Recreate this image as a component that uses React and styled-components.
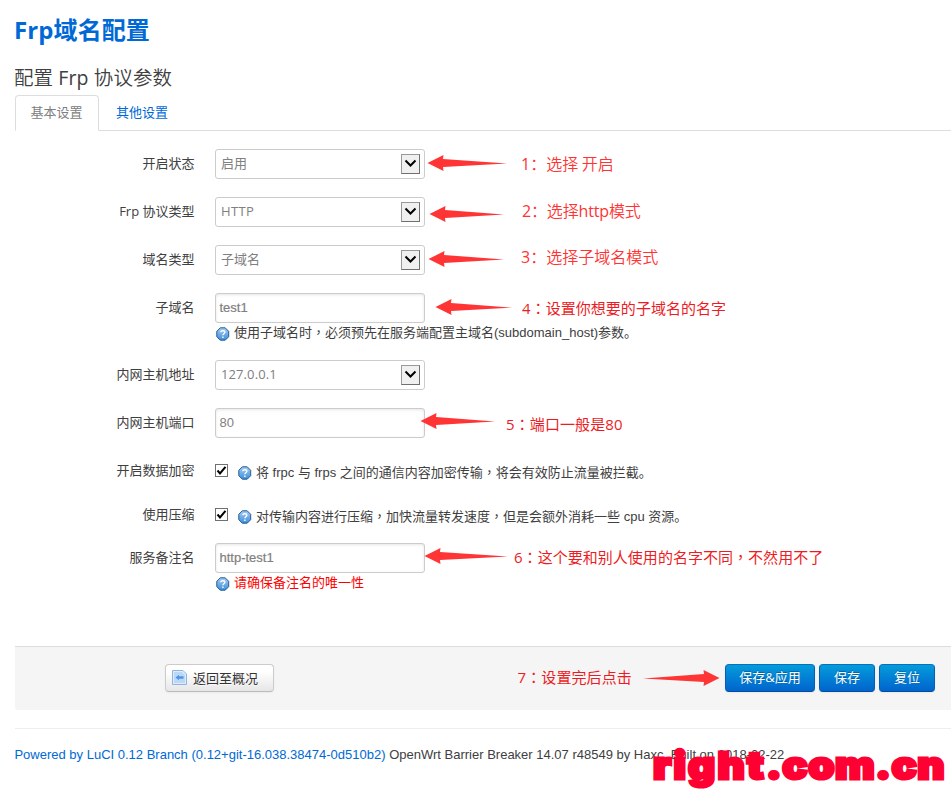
import React from 'react';
import styled, { createGlobalStyle, css } from 'styled-components';

const cjk = '"Noto Sans CJK SC", sans-serif';

const GlobalStyle = createGlobalStyle`
  * { box-sizing: border-box; }
  body { margin: 0; background: #fff; overflow: hidden; }
`;

const Page = styled.div`
  width: 951px;
  height: 793px;
  padding-left: 15px;
  overflow: hidden;
  display: flex;
  flex-direction: column;
  color: #404040;
  font: 13px/18px "Liberation Sans", ${cjk};
  white-space: nowrap;
`;

const Title = styled.h2`
  margin: 0 0 0 -1px;
  height: 60px;
  padding-top: 12px;
  font: bold 24px/36px "Open Sans", ${cjk};
  color: #0069d6;
  letter-spacing: 0.1px;
`;

const Subtitle = styled.h3`
  margin: 0 0 0 -1px;
  height: 35px;
  font: 400 19.5px/33px "Open Sans", ${cjk};
  letter-spacing: 0.1px;
`;

const Light = styled.span`
  font-family: "Noto Sans CJK SC", sans-serif;
  font-weight: 350;
`;

const Tabs = styled.nav`
  display: flex;
  height: 36px;
  border-bottom: 1px solid #ddd;
`;

const Tab = styled.a`
  height: 36px;
  width: ${(p) => (p.$active ? 84 : 86)}px;
  padding-right: ${(p) => (p.$active ? 1 : 0)}px;
  text-align: center;
  line-height: 34px;
  border: 1px solid ${(p) => (p.$active ? '#ddd' : 'transparent')};
  border-bottom-color: ${(p) => (p.$active ? '#fff' : 'transparent')};
  border-radius: 4px 4px 0 0;
  color: ${(p) => (p.$active ? '#808080' : '#0069d6')};
`;

const Form = styled.main`
  display: flex;
  flex-direction: column;
  padding-top: 18px;
  height: 515px;
`;

const Row = styled.div`
  position: relative;
  display: flex;
  align-items: flex-start;
  height: ${(p) => p.$h}px;
`;

const Label = styled.label`
  width: 179.5px;
  margin-right: 20.5px;
  text-align: right;
  line-height: 29px;
  font-family: "Open Sans", ${cjk};
`;

const Field = styled.div`
  display: flex;
  flex-direction: column;
`;

const box = css`
  width: 210px;
  height: 30px;
  border: 1px solid #ccc;
  border-radius: 3px;
  background: #fff;
  color: #808080;
`;

const SelectBox = styled.div`
  ${box}
  display: flex;
  align-items: center;
  justify-content: space-between;
  padding: 0 4px 0 5px;
  font-family: "Open Sans", ${cjk};
  line-height: 26px;
`;

const SelectValue = styled.span`
  padding-bottom: 2px;
  letter-spacing: ${(p) => p.$spacing || 0}px;
`;

const SelectButton = styled.span`
  display: flex;
  width: 19px;
  height: 20px;
  background: #f0f0f0;
  border: 1px solid #707070;
  border-color: #999 #707070 #707070 #999;
`;

const TextBox = styled.div`
  ${box}
  padding: 0 3.5px;
  line-height: 27px;
  box-shadow: inset 0 1px 3px rgba(0, 0, 0, 0.1);
  -webkit-text-stroke: ${(p) => (p.$dense ? '0.2px' : '0')};
`;

const Help = styled.div`
  display: flex;
  align-items: center;
  gap: 4px;
  height: 20px;
  padding-left: 1px;
  line-height: 18px;
  color: ${(p) => (p.$warn ? '#f00' : 'inherit')};

  svg {
    margin-top: 1px;
  }
`;

const HelpText = styled.span`
  padding-bottom: ${(p) => (p.$raised ? 2 : 0)}px;
`;

const CheckLine = styled.div`
  display: flex;
  height: 30px;
  align-items: center;
`;

const CheckBox = styled.span`
  display: flex;
  width: 13px;
  height: 13px;
  margin: 0 9px 1px 0;
  border: 1px solid #707070;
  background: #fff;
`;

const CheckHelp = styled(Help)`
  margin-top: 3px;
`;

const Punct = styled.span`
  font-family: "Noto Sans CJK TC", sans-serif;
`;

const Note = styled.span`
  position: absolute;
  left: ${(p) => p.$x}px;
  top: ${(p) => p.$y}px;
  font: ${(p) => (p.$large ? '16px' : '15px')}/24px "Open Sans", ${cjk};
  letter-spacing: ${(p) => p.$spacing || 0}px;
  color: ${(p) => (p.$large ? '#f33' : '#ed1c24')};
`;

const ArrowSvg = styled.svg`
  position: absolute;
  left: ${(p) => p.$x}px;
  top: ${(p) => p.$y}px;
  transform: ${(p) => (p.$flip ? 'scaleX(-1)' : 'none')};
`;

const Actions = styled.section`
  position: relative;
  display: flex;
  align-items: flex-start;
  height: 64px;
  padding: 17px 16px 0 150px;
  background: #f5f5f5;
  border-top: 1px solid #ddd;
  border-radius: 0 0 0 3px;
`;

const Button = styled.button`
  display: flex;
  align-items: center;
  justify-content: center;
  width: ${(p) => p.$w}px;
  height: 28px;
  margin: 0 0 0 4px;
  padding: 0 0 2px;
  border: 1px solid;
  border-color: #0572bd #0560b5 #004b9a;
  border-radius: 4px;
  color: #fff;
  font: 13px/18px "Open Sans", ${cjk};
  background: linear-gradient(#049cdb, #0064cd);
  text-shadow: 0 -1px 0 rgba(0, 0, 0, 0.25);
  box-shadow: 0 1px 2px rgba(0, 0, 0, 0.05);
`;

const BackButton = styled(Button)`
  justify-content: flex-start;
  margin: 0 auto 0 0;
  padding: 0 0 1px 6px;
  gap: 6px;
  color: #333;
  border-color: #ccc #ccc #bbb;
  background: linear-gradient(#fff 25%, #e6e6e6);
  text-shadow: 0 1px 1px rgba(255, 255, 255, 0.75);
`;

const Footer = styled.footer`
  position: relative;
  margin-top: 18px;
  padding-top: 17px;
  height: 65px;
  border-top: 1px solid #eee;
`;

const FooterText = styled.div`
  margin-left: -0.6px;
`;

const FooterLink = styled.a`
  color: #0069d6;
`;

const Watermark = styled.span`
  position: absolute;
  left: 638px;
  top: 14px;
  font: 900 37.5px/46px Inter, sans-serif;
  color: #ff0033;
  -webkit-text-stroke: 3px #ff0033;
  letter-spacing: 0.5px;
  transform-origin: 0 0;
  transform: scaleX(1.12);
`;

const WatermarkHead = styled.span`
  letter-spacing: 2px;
`;

const Arrow = ({ x, y, w = 80, flip }) => (
  <ArrowSvg $x={x} $y={y} $flip={flip} width={w} height="18" viewBox={`0 0 ${w} 18`}>
    <path d={`M.5 9 L16.5 1 L16 5 L${w} 9.6 L16 13 L16.5 17 Z`} fill="#ff3535" />
  </ArrowSvg>
);

const HelpIcon = () => (
  <svg width="14" height="14" viewBox="0 0 14 14">
    <defs>
      <linearGradient id="helpFill" x1="0" y1="0" x2="0" y2="1">
        <stop offset="0" stopColor="#a5cdf2" />
        <stop offset="1" stopColor="#3d8fdc" />
      </linearGradient>
    </defs>
    <path d="M4.3 .8H9.2L12.7 4.3V9.7L9.2 13.2H4.3L.8 9.7V4.3Z" fill="url(#helpFill)" stroke="#245c91" strokeWidth="1" />
    <path d="M4.8 5.2C4.8 3.3 8.8 3.3 8.8 5.3C8.8 6.8 6.9 6.7 6.9 8.3M6.9 9.6V11" fill="none" stroke="#fff" strokeWidth="1.4" />
  </svg>
);

const BackIcon = () => (
  <svg width="15" height="15" viewBox="0 0 15 15">
    <path d="M.5 .5H11L14.5 4V14.5H.5Z" fill="#deebfa" stroke="#8eb4df" />
    <path d="M2 2H10L13 5V13H2Z" fill="#bcd8f7" />
    <path d="M3.5 7.5L7 4.7V6.3H11.5V8.7H7V10.3Z" fill="#4f94e8" />
  </svg>
);

const Select = ({ value, spacing }) => (
  <SelectBox>
    <SelectValue $spacing={spacing}>{value}</SelectValue>
    <SelectButton>
      <svg width="17" height="18" viewBox="0 0 17 18">
        <path d="M3.5 5.5L8.5 10.5L13.5 5.5" fill="none" stroke="#000" strokeWidth="2" />
      </svg>
    </SelectButton>
  </SelectBox>
);

const Check = () => (
  <CheckBox>
    <svg width="11" height="11" viewBox="0 0 11 11">
      <path d="M1.5 5.5L4 8.5L9.5 1.8" fill="none" stroke="#000" strokeWidth="2" />
    </svg>
  </CheckBox>
);

export default function App() {
  return (
    <Page>
      <GlobalStyle />
      <Title>Frp域名配置</Title>
      <Subtitle><Light>配置</Light> Frp <Light>协议参数</Light></Subtitle>
      <Tabs>
        <Tab $active>基本设置</Tab>
        <Tab>其他设置</Tab>
      </Tabs>
      <Form>
        <Row $h={48}>
          <Label>开启状态</Label>
          <Select value="启用" />
          <Arrow x={412} y={5} />
          <Note $large $x={506} $y={2}>1<Light>：选择 开启</Light></Note>
        </Row>
        <Row $h={48}>
          <Label>Frp 协议类型</Label>
          <Select value="HTTP" spacing={0.4} />
          <Arrow x={414} y={8} w={75} />
          <Note $large $x={507} $y={1} $spacing={-0.15}>2<Light>：选择</Light>http<Light>模式</Light></Note>
        </Row>
        <Row $h={48}>
          <Label>域名类型</Label>
          <Select value="子域名" />
          <Arrow x={413} y={5} w={76} />
          <Note $large $x={506} $y={-1}>3<Light>：选择子域名模式</Light></Note>
        </Row>
        <Row $h={67}>
          <Label>子域名</Label>
          <Field>
            <TextBox $dense>test1</TextBox>
            <Help>
              <HelpIcon />
              <HelpText $raised>使用子域名时<Punct>，</Punct>必须预先在服务端配置主域名(subdomain_host)参数。</HelpText>
            </Help>
          </Field>
          <Arrow x={420} y={5} w={77} />
          <Note $x={507} $y={3} $spacing={0.04}>4<Punct>：</Punct>设置你想要的子域名的名字</Note>
        </Row>
        <Row $h={48}>
          <Label>内网主机地址</Label>
          <Select value="127.0.0.1" spacing={0.1} />
        </Row>
        <Row $h={48}>
          <Label>内网主机端口</Label>
          <TextBox>80</TextBox>
          <Arrow x={405} y={4} w={75} />
          <Note $x={491} $y={4} $spacing={0.1}>5<Punct>：</Punct>端口一般是80</Note>
        </Row>
        <Row $h={44}>
          <Label>开启数据加密</Label>
          <CheckLine>
            <Check />
            <CheckHelp>
              <HelpIcon />
              <HelpText>将 frpc 与 frps 之间的通信内容加密传输<Punct>，</Punct>将会有效防止流量被拦截。</HelpText>
            </CheckHelp>
          </CheckLine>
        </Row>
        <Row $h={43}>
          <Label>使用压缩</Label>
          <CheckLine>
            <Check />
            <CheckHelp>
              <HelpIcon />
              <HelpText>对传输内容进行压缩<Punct>，</Punct>加快流量转发速度<Punct>，</Punct>但是会额外消耗一些 cpu 资源。</HelpText>
            </CheckHelp>
          </CheckLine>
        </Row>
        <Row $h={60}>
          <Label>服务备注名</Label>
          <Field>
            <TextBox $dense>http-test1</TextBox>
            <Help $warn>
              <HelpIcon />
              <HelpText>请确保备注名的唯一性</HelpText>
            </Help>
          </Field>
          <Arrow x={409} y={4} w={84} />
          <Note $x={499} $y={2} $spacing={0.03}>6<Punct>：</Punct>这个要和别人使用的名字不同<Punct>，</Punct>不然用不了</Note>
        </Row>
      </Form>
      <Actions>
        <BackButton $w={109}><BackIcon />返回至概况</BackButton>
        <Note $x={502.5} $y={18} $spacing={0.1}>7<Punct>：</Punct>设置完后点击</Note>
        <Arrow x={628} y={22} w={77} flip />
        <Button $w={90}>保存&amp;应用</Button>
        <Button $w={56}>保存</Button>
        <Button $w={56}>复位</Button>
      </Actions>
      <Footer>
        <FooterText>
          <FooterLink>Powered by LuCI 0.12 Branch (0.12+git-16.038.38474-0d510b2)</FooterLink>
          {' '}OpenWrt Barrier Breaker 14.07 r48549 by Haxc. Built on 2018-02-22
        </FooterText>
        <Watermark><WatermarkHead>right</WatermarkHead>.com.cn</Watermark>
      </Footer>
    </Page>
  );
}
